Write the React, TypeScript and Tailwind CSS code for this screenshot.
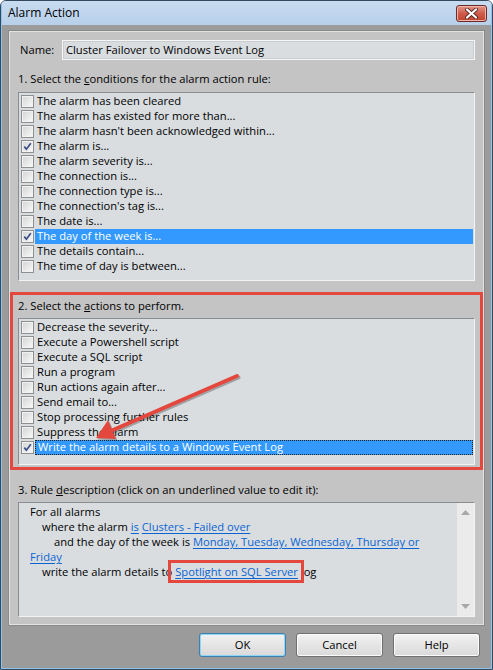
import clsx from "clsx";

const conditions: [string, boolean, boolean][] = [
  ["The alarm has been cleared", false, false],
  ["The alarm has existed for more than...", false, false],
  ["The alarm hasn't been acknowledged within...", false, false],
  ["The alarm is...", true, false],
  ["The alarm severity is...", false, false],
  ["The connection is...", false, false],
  ["The connection type is...", false, false],
  ["The connection's tag is...", false, false],
  ["The date is...", false, false],
  ["The day of the week is...", true, true],
  ["The details contain...", false, false],
  ["The time of day is between...", false, false],
];

const actions: [string, boolean, boolean][] = [
  ["Decrease the severity...", false, false],
  ["Execute a Powershell script", false, false],
  ["Execute a SQL script", false, false],
  ["Run a program", false, false],
  ["Run actions again after...", false, false],
  ["Send email to...", false, false],
  ["Stop processing further rules", false, false],
  ["Suppress the alarm", false, false],
  ["Write the alarm details to a Windows Event Log", true, true],
];

function Box({ checked }: { checked?: boolean }) {
  return (
    <span className="flex h-[13px] w-[13px] shrink-0 items-center justify-center border border-[#8e8f8f] bg-linear-to-br from-[#d2d3d4] to-[#fafafa] shadow-[inset_0_0_0_1px_#f2f2f2]">
      {checked && (
        <svg width="9" height="9" viewBox="0 0 9 9">
          <path d="M1.3 4.6 L3.4 7.2 L7.8 1.2" fill="none" stroke="#3b4f86" strokeWidth="1.7" />
        </svg>
      )}
    </span>
  );
}

function List({ items, height, focus }: { items: [string, boolean, boolean][]; height: string; focus?: boolean }) {
  return (
    <div className={clsx("border border-[#8a8d91] border-r-[#f4f4f4] border-b-[#f4f4f4] bg-[#d9dde0] pt-[1px]", height)}>
      {items.map(([t, c, sel]) => (
        <div key={t} className="flex h-[15px] items-center pl-[2px] pr-[1px]">
          <Box checked={c} />
          <span
            className={clsx(
              "ml-[1px] flex h-full flex-1 items-center whitespace-nowrap pl-[2px]",
              sel && "bg-[#3399ff] text-white",
              sel && focus && "border border-dotted border-[#222] pl-[1px]"
            )}
          >
            {t}
          </span>
        </div>
      ))}
    </div>
  );
}

function Link({ children }: { children: React.ReactNode }) {
  return <span className="text-[#0a64d2] underline underline-offset-[2px]">{children}</span>;
}

function Btn({ label, def }: { label: string; def?: boolean }) {
  return (
    <button
      className={clsx(
        "flex h-[24px] w-[87px] items-center justify-center rounded-[3px] border bg-linear-to-b from-[#f2f2f2] to-[#d9d9d9] text-black",
        def ? "border-[#3c7fb1] shadow-[inset_0_0_0_1px_#8fd6f5]" : "border-[#707070] shadow-[inset_0_0_0_1px_#fbfbfb]"
      )}
    >
      {label}
    </button>
  );
}

export default function App() {
  return (
    <div className="relative h-[670px] w-[493px] overflow-hidden rounded-t-[6px] border border-[#34495e] font-['Open_Sans',sans-serif] text-[11.2px] text-black">
      <div className="flex h-full flex-col border border-t-0 border-[#8cc4ec] bg-[#9b9b9b]">
        <div className="flex h-[24px] shrink-0 items-center justify-between bg-linear-to-b from-[#c8dcf1] to-[#b7cfe9] pl-[6px] pr-[4px]">
          <span className="text-[12px]">Alarm Action</span>
          <div className="mt-[4px] flex h-[17px] w-[31px] items-center justify-center self-start rounded-[3px] border border-[#6b2b27] bg-linear-to-b from-[#e3968b] via-[#cf5a49] to-[#c0442f] shadow-[inset_0_0_0_1px_#efb3aa]">
            <svg width="13" height="11" viewBox="0 0 13 11">
              <path d="M2 1.5 L11 9.5 M11 1.5 L2 9.5" stroke="#5a2a28" strokeWidth="4" strokeLinecap="round" />
              <path d="M2 1.5 L11 9.5 M11 1.5 L2 9.5" stroke="#fff" strokeWidth="2.2" strokeLinecap="round" />
            </svg>
          </div>
        </div>

        <div className="mx-[7px] mt-[6px] border border-[#e2e2e2] bg-[#c4c4c4] px-[8px] pb-[7px] shadow-[0_0_0_1px_#8a8a8a]">
          <div className="mt-[8px] flex items-center">
            <span className="w-[44px] pl-[2px]">Name:</span>
            <div className="flex h-[20px] flex-1 items-center border border-[#f6f6f6] bg-[#d9dde0] pl-[3px] shadow-[inset_0_0_0_1px_#c9cdd0]">
              Cluster Failover to Windows Event Log
            </div>
          </div>

          <div className="mt-[11px] h-[16px] leading-[16px]">
            1. Select the <span className="underline">c</span>onditions for the alarm action rule:
          </div>
          <div className="mt-[5px]">
            <List items={conditions} height="h-[189px]" />
          </div>

          <div className="-mx-[8px] mt-[11px] border-[3px] border-[#e4473d] px-[5px] pb-[2px] pt-[3px]">
            <div className="h-[16px] leading-[16px]">
              2. Select the <span className="underline">a</span>ctions to perform.
            </div>
            <div className="mt-[4px]">
              <List items={actions} height="h-[147px]" focus />
            </div>
          </div>

          <div className="mt-[12px] h-[16px] leading-[16px]">
            3. Rule <span className="underline">d</span>escription (click on an underlined value to edit it):
          </div>
          <div className="mt-[4px] flex h-[115px] border border-[#8a8d91] border-r-[#f4f4f4] border-b-[#f4f4f4] bg-[#d9dde0]">
            <div className="flex-1 pl-[11px] pt-[1px] leading-[15px]">
              <div>For all alarms</div>
              <div className="pl-[12px]">
                where the alarm <Link>is</Link> <Link>Clusters - Failed over</Link>
              </div>
              <div className="pl-[24px]">
                and the day of the week is <Link>Monday, Tuesday, Wednesday, Thursday or</Link>
              </div>
              <div>
                <Link>Friday</Link>
              </div>
              <div className="pl-[12px]">
                write the alarm details to{" "}
                <span className="relative">
                  <Link>Spotlight on SQL Server</Link>
                  <span className="absolute -bottom-[4px] -left-[7px] -right-[6px] -top-[4px] border-[3px] border-[#e4473d]" />
                </span>{" "}
                log
              </div>
            </div>
            <div className="flex w-[17px] flex-col items-center justify-between bg-[#ebebeb] py-[7px]">
              <svg width="9" height="5" viewBox="0 0 9 5">
                <path d="M0 5 L4.5 0 L9 5 Z" fill="#a8a8a8" />
              </svg>
              <svg width="9" height="5" viewBox="0 0 9 5">
                <path d="M0 0 L4.5 5 L9 0 Z" fill="#a8a8a8" />
              </svg>
            </div>
          </div>
        </div>

        <div className="mt-[8px] flex justify-end gap-[10px] pr-[11px]">
          <Btn label="OK" def />
          <Btn label="Cancel" />
          <Btn label="Help" />
        </div>
      </div>

      <svg className="pointer-events-none absolute left-0 top-0" width="493" height="670" viewBox="0 0 493 670">
        <g transform="translate(1.5 1.5)" opacity="0.25">
          <path d="M236 375 L112 429" stroke="#000" strokeWidth="4" strokeLinecap="round" />
          <path d="M95 437 L115 438 L107 419 Z" fill="#000" />
        </g>
        <path d="M236 375 L112 429" stroke="#e4473d" strokeWidth="4" strokeLinecap="round" />
        <path d="M95 437 L115 438 L107 419 Z" fill="#e4473d" />
      </svg>
    </div>
  );
}
